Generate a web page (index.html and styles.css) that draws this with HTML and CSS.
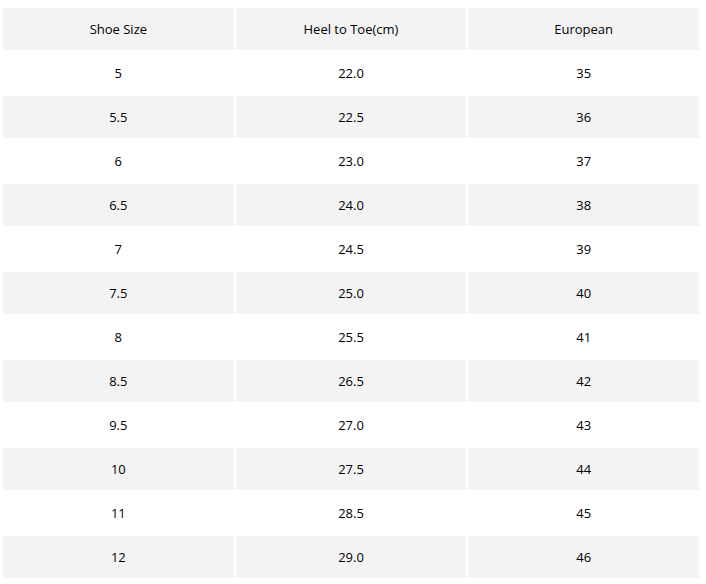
FILE: index.html
```html
<!DOCTYPE html>
<html>
<head>
<meta charset="utf-8">
<link rel="stylesheet" href="styles.css">
</head>
<body>
<table class="size-table">
  <thead>
    <tr><th>Shoe Size</th><th>Heel to Toe(cm)</th><th>European</th></tr>
  </thead>
  <tbody>
    <tr><td>5</td><td>22.0</td><td>35</td></tr>
    <tr><td>5.5</td><td>22.5</td><td>36</td></tr>
    <tr><td>6</td><td>23.0</td><td>37</td></tr>
    <tr><td>6.5</td><td>24.0</td><td>38</td></tr>
    <tr><td>7</td><td>24.5</td><td>39</td></tr>
    <tr><td>7.5</td><td>25.0</td><td>40</td></tr>
    <tr><td>8</td><td>25.5</td><td>41</td></tr>
    <tr><td>8.5</td><td>26.5</td><td>42</td></tr>
    <tr><td>9.5</td><td>27.0</td><td>43</td></tr>
    <tr><td>10</td><td>27.5</td><td>44</td></tr>
    <tr><td>11</td><td>28.5</td><td>45</td></tr>
    <tr><td>12</td><td>29.0</td><td>46</td></tr>
  </tbody>
</table>
</body>
</html>
```
FILE: styles.css
```css
html, body {
  margin: 0;
  padding: 0;
  background: #ffffff;
}
body {
  padding: 6px 0 0 1px;
  font-family: "Open Sans", "Liberation Sans", sans-serif;
  font-size: 13px;
  color: #000000;
}
.size-table {
  border-collapse: separate;
  border-spacing: 2px;
  width: 700px;
  table-layout: fixed;
}
.size-table th,
.size-table td {
  height: 42px;
  padding: 0;
  text-align: center;
  vertical-align: middle;
  font-weight: normal;
}
.size-table th {
  background: #f3f3f3;
}
.size-table tbody tr:nth-child(even) td {
  background: #f3f3f3;
}
```
